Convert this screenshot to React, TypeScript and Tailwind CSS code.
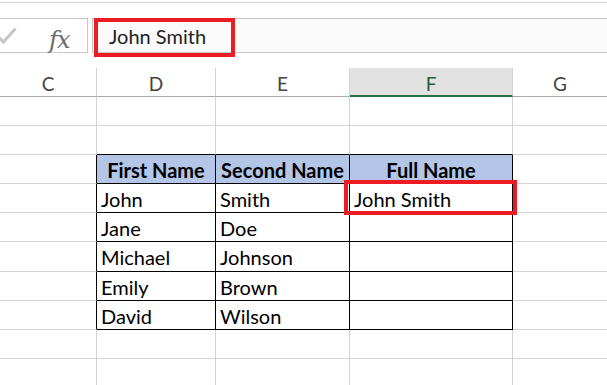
import React from "react";

type Col = { key: string; w: string };

const cols: Col[] = [
  { key: "C", w: "w-[97px]" },
  { key: "D", w: "w-[119px]" },
  { key: "E", w: "w-[134px]" },
  { key: "F", w: "w-[163px]" },
  { key: "G", w: "flex-1" },
];

// rows 1..10, table occupies rows 3..8 in columns D..F
const rowHeights = ["h-[29px]", "h-[29px]", "h-[29px]", "h-[29px]", "h-[29px]", "h-[30px]", "h-[29px]", "h-[29px]", "h-[29px]", "h-[29px]"];

const cells: Record<string, string> = {
  "3D": "First Name",
  "3E": "Second Name",
  "3F": "Full Name",
  "4D": "John",
  "4E": "Smith",
  "4F": "John Smith",
  "5D": "Jane",
  "5E": "Doe",
  "6D": "Michael",
  "6E": "Johnson",
  "7D": "Emily",
  "7E": "Brown",
  "8D": "David",
  "8E": "Wilson",
};

const inTable = (r: number, c: string) => r >= 3 && r <= 8 && (c === "D" || c === "E" || c === "F");

function Cell({ r, col }: { r: number; col: Col }) {
  const c = col.key;
  const blackBottom = (r >= 2 && r <= 8) && (c === "D" || c === "E" || c === "F");
  const blackRight = r >= 3 && r <= 8 && (c === "C" || c === "D" || c === "E" || c === "F");
  const isHead = r === 3 && inTable(r, c);
  const text = cells[`${r}${c}`];
  return (
    <div
      className={[
        col.w,
        "h-full flex items-center pt-[1px] border-b",
        c === "G" ? "" : "border-r",
        blackBottom ? "border-b-black" : "border-b-[#d4d4d4]",
        blackRight ? "border-r-black" : "border-r-[#d4d4d4]",
        isHead ? "bg-[#b4c6e7] justify-center font-bold" : "pl-[4px]",
      ].join(" ")}
    >
      {text && <span className="text-black text-[20px] leading-none whitespace-nowrap">{text}</span>}
    </div>
  );
}

export default function App() {
  return (
    <div
      className="w-[607px] h-[385px] overflow-hidden bg-white relative"
      style={{ fontFamily: "Lato, 'Liberation Sans', sans-serif" }}
    >
      {/* top edge */}
      <div className="mt-[2px] h-[16px] border-t border-[#d5d5d5]" />

      {/* formula bar */}
      <div className="flex h-[35px]">
        <div className="w-[88px] border-y border-r border-[#c6c6c6] bg-white relative">
          <svg className="absolute left-[-4px] top-[7px]" width="21" height="19" viewBox="0 0 21 19">
            <path d="M1.5 10 L7.5 16 L19.5 2.5" fill="none" stroke="#c6c6c6" strokeWidth="3" />
          </svg>
          <span
            className="absolute left-[49px] top-[3px] text-[24px] italic text-[#6b6b6b] tracking-[-1px]"
            style={{ fontFamily: "'DejaVu Serif', 'Liberation Serif', serif" }}
          >
            fx
          </span>
        </div>
        <div className="w-[4px]" />
        <div className="flex-1 border border-r-0 border-[#c6c6c6] bg-[#fbfbfb] flex items-center pl-[16px]">
          <span className="text-[20px] text-[#222] leading-none">John Smith</span>
        </div>
      </div>

      <div className="h-[15px]" />

      {/* column headers */}
      <div className="flex h-[29px]">
        {cols.map((col) => (
          <div
            key={col.key}
            className={[
              col.w,
              "h-full flex items-center justify-center pt-[3px]",
              col.key === "G" ? "" : "border-r border-r-[#d4d4d4]",
              col.key === "F"
                ? "bg-[#e1e1e1] border-b-2 border-b-[#217346] text-[#255e3e]"
                : "border-b border-b-[#ababab] text-[#444]",
            ].join(" ")}
          >
            <span className="text-[19px] leading-none">{col.key}</span>
          </div>
        ))}
      </div>

      {/* grid rows */}
      {rowHeights.map((h, i) => (
        <div key={i} className={`flex ${h}`}>
          {cols.map((col) => (
            <Cell key={col.key} r={i + 1} col={col} />
          ))}
        </div>
      ))}

      {/* red annotation boxes */}
      <div className="absolute left-[94px] top-[18px] w-[141px] h-[39px] border-4 border-[#ed1c24]" />
      <div className="absolute left-[344px] top-[180px] w-[173px] h-[35px] border-4 border-[#ed1c24]" />
    </div>
  );
}
